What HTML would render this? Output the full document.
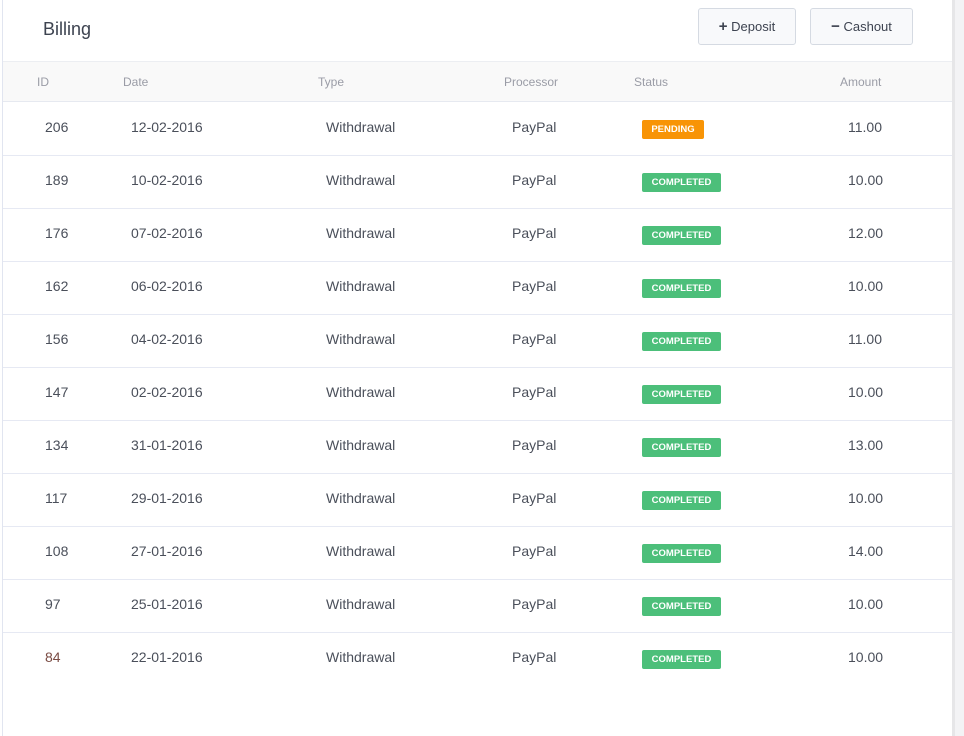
<!DOCTYPE html>
<html><head><style>
html,body{margin:0;padding:0;width:964px;height:736px;overflow:hidden;background:#f3f3f5;font-family:"Liberation Sans",Arial,sans-serif;}
.page{position:absolute;left:0;top:0;width:952px;height:736px;background:#fff;border-right:3px solid #e6e6e8;}
.lb{position:absolute;left:2px;top:0;width:1px;height:736px;background:#e1e5f0;}
.title{position:absolute;left:43px;top:19px;font-size:18px;color:#3d4350;}
.btn{position:absolute;top:8px;height:37px;border:1px solid #d5dae2;border-radius:3px;background:#f8f9fb;font-size:13px;color:#3d4350;line-height:35px;text-align:center;box-sizing:border-box;}
.hdr{position:absolute;left:3px;top:61px;width:949px;height:41px;background:#f9f9f9;border-top:1px solid #eceef2;border-bottom:1px solid #e6e9f0;box-sizing:border-box;}
.h{position:absolute;top:75px;font-size:12px;color:#9a9ca6;}
.row{position:absolute;left:3px;width:949px;height:53px;border-bottom:1px solid #e6e9f3;box-sizing:border-box;}
.c{position:absolute;font-size:14px;color:#4a4f5a;}
.b{position:absolute;height:19px;line-height:19px;font-size:9.5px;font-weight:bold;color:#fff;border-radius:2px;text-align:center;}
</style></head><body>
<div class="page"></div><div class="lb"></div>
<div class="title">Billing</div>
<div class="btn" style="left:698px;width:98px;"><b style="font-size:15px;">+</b> Deposit</div>
<div class="btn" style="left:810px;width:103px;"><b style="font-size:15px;">−</b> Cashout</div>
<div class="hdr"></div>
<div class="h" style="left:37px">ID</div>
<div class="h" style="left:123px">Date</div>
<div class="h" style="left:318px">Type</div>
<div class="h" style="left:504px">Processor</div>
<div class="h" style="left:634px">Status</div>
<div class="h" style="left:840px">Amount</div>
<div id="rows"></div>
<script>
var d=[["206","12-02-2016","11.00",1],["189","10-02-2016","10.00"],["176","07-02-2016","12.00"],["162","06-02-2016","10.00"],["156","04-02-2016","11.00"],["147","02-02-2016","10.00"],["134","31-01-2016","13.00"],["117","29-01-2016","10.00"],["108","27-01-2016","14.00"],["97","25-01-2016","10.00"],["84","22-01-2016","10.00"]];
var h="";
d.forEach(function(r,i){var t=103+i*53;
h+='<div class="row" style="top:'+t+'px;'+(i==10?'border:none':'')+'"></div>';
var y=t+16;
h+='<div class="c" style="left:45px;top:'+y+'px;'+(i==10?'color:#7a4b43':'')+'">'+r[0]+'</div>';
h+='<div class="c" style="left:131px;top:'+y+'px">'+r[1]+'</div>';
h+='<div class="c" style="left:326px;top:'+y+'px">Withdrawal</div>';
h+='<div class="c" style="left:512px;top:'+y+'px">PayPal</div>';
h+='<div class="c" style="left:848px;top:'+y+'px">'+r[2]+'</div>';
if(r[3])h+='<div class="b" style="left:642px;width:62px;top:'+(t+17)+'px;background:#f89406">PENDING</div>';
else h+='<div class="b" style="left:642px;width:79px;top:'+(t+17)+'px;background:#4cbf7a">COMPLETED</div>';
});
document.getElementById("rows").innerHTML=h;
</script>
</body></html>
